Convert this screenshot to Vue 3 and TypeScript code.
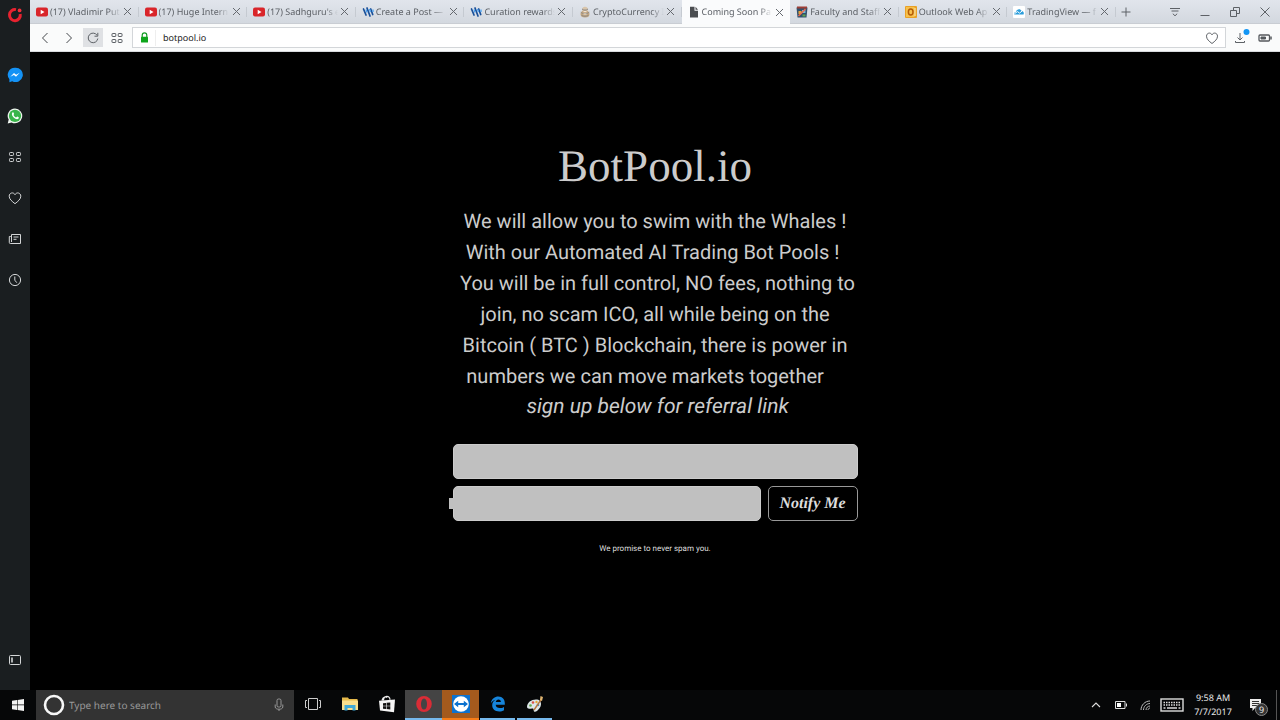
<script setup lang="ts">
import { ref } from 'vue'

type TabIcon = 'youtube' | 'steem' | 'coin' | 'page' | 'school' | 'outlook' | 'cloud'
interface Tab { title: string; icon: TabIcon; active?: boolean }

const tabs: Tab[] = [
  { title: '(17) Vladimir Put', icon: 'youtube' },
  { title: '(17) Huge Intern', icon: 'youtube' },
  { title: "(17) Sadhguru's e", icon: 'youtube' },
  { title: 'Create a Post —', icon: 'steem' },
  { title: 'Curation rewards', icon: 'steem' },
  { title: 'CryptoCurrency I', icon: 'coin' },
  { title: 'Coming Soon Pa', icon: 'page', active: true },
  { title: 'Faculty and Staff', icon: 'school' },
  { title: 'Outlook Web Ap', icon: 'outlook' },
  { title: 'TradingView — f', icon: 'cloud' },
]

const lines = [
  'We will allow you to swim with the Whales !',
  'With our Automated AI Trading Bot Pools !\u00a0',
  '\u00a0You will be in full control, NO fees, nothing to',
  'join, no scam ICO, all while being on the',
  'Bitcoin ( BTC ) Blockchain, there is power in',
  'numbers we can move markets together\u00a0\u00a0\u00a0\u00a0',
]

const address = ref('botpool.io')
const name = ref('')
const email = ref('')
const query = ref('')
</script>

<template>
  <div class="desktop">
    <div class="browser">
      <aside class="sidebar">
        <button class="brand" aria-label="Opera menu">
          <svg width="16" height="16" viewBox="0 0 16 16"><path d="M9 2.600A5.400 5.600 0 1 0 13.200 7" fill="none" stroke="#e8222f" stroke-width="3" /><circle cx="12.600" cy="3.400" r="1.900" fill="#f0303a" /></svg>
        </button>
        <nav class="side-list" aria-label="Sidebar">
          <button aria-label="Messenger">
            <svg width="16" height="16" viewBox="0 0 16 16"><path d="M8 .7a7 7 0 0 0-5.600 11.500v3l2.800-1A7.200 7.200 0 1 0 8 .7z" fill="#1492f5" /><path d="M3.300 9.800 7 5.900l2.100 1.900 3.600-2-3.700 4-2.100-1.900z" fill="#fff" /></svg>
          </button>
          <button aria-label="WhatsApp">
            <svg width="16" height="16" viewBox="0 0 16 16"><path d="M8 .6A7.300 7.300 0 0 0 1.700 11.600L.7 15.400l3.900-1A7.300 7.300 0 1 0 8 .6z" fill="#eef5ee" /><circle cx="8" cy="7.900" r="6.100" fill="#39b54a" /><path d="M5.400 4.500c.7-.6 1.200-.2 1.700 1.300.2.600-.8.800-.5 1.400.5 1 1.200 1.700 2.300 2.200.6.200.9-1 1.400-.8 1.500.7 1.800 1 1.300 1.800-1.800 2.700-8.600-2.600-6.200-5.900z" fill="#fff" /></svg>
          </button>
          <button aria-label="Speed Dial">
            <svg class="line" width="14" height="14" viewBox="0 0 14 14"><rect x="1.500" y="2.500" width="4" height="3" rx=".8" /><rect x="8.500" y="2.500" width="4" height="3" rx=".8" /><rect x="1.500" y="8.500" width="4" height="3" rx=".8" /><rect x="8.500" y="8.500" width="4" height="3" rx=".8" /></svg>
          </button>
          <button aria-label="Bookmarks">
            <svg class="line" width="14" height="14" viewBox="0 0 14 14"><path d="M7 12.700C4 10.300 1.200 8.200 1.200 5.200 1.200 1.700 5.500.7 7 3.700 8.500.7 12.800 1.700 12.800 5.200 12.800 8.200 10 10.300 7 12.700z" /></svg>
          </button>
          <button aria-label="News">
            <svg class="line" width="14" height="14" viewBox="0 0 14 14"><path d="M3.500 2.500h9v9H2.300a1 1 0 0 1-1-1V4.500h1.500M3.500 2.500v7.500M5.500 5h5M5.500 7.300h3" /></svg>
          </button>
          <button aria-label="History">
            <svg class="line" width="14" height="14" viewBox="0 0 14 14"><circle cx="7" cy="7" r="5.600" /><path d="M6.800 3.500v3.700l2 2.500" /></svg>
          </button>
        </nav>
        <button class="side-toggle" aria-label="Toggle sidebar">
          <svg class="line" width="14" height="14" viewBox="0 0 14 14"><rect x="1.500" y="2.500" width="11" height="9" rx="1" /><path d="M4 4.500v5" stroke-width="1.600" /></svg>
        </button>
      </aside>

      <div class="window">
        <header class="tabbar">
          <div class="tabs">
            <div v-for="tab in tabs" :key="tab.title" class="tab" :class="{ active: tab.active }">
              <svg v-if="tab.icon === 'youtube'" class="fav" viewBox="0 0 12 12"><rect y="1.500" width="12" height="9" rx="2" fill="#d9252a" /><path d="M4.700 3.800v4.400L8.500 6z" fill="#fff" /></svg>
              <svg v-else-if="tab.icon === 'steem'" class="fav" viewBox="0 0 12 12"><path d="M1.500 3 4 9M5 2l3 8M8.700 3l2 5.500" fill="none" stroke="#1a5099" stroke-width="1.700" stroke-linecap="round" /><path d="M4 3.500 5 6.500M7.500 3l1 3M11 3.500V6" stroke="#4ba2f2" stroke-width="1.300" /></svg>
              <svg v-else-if="tab.icon === 'coin'" class="fav" viewBox="0 0 12 12"><circle cx="6" cy="3.500" r="2.800" fill="#d9c5aa" /><ellipse cx="6" cy="8" rx="4.500" ry="3.600" fill="#c5a781" /><path d="M1.800 6.200c2 2 6 2 8.400 0M3 3c2 1.500 4 1.500 6 0M2.500 9.300c2 1.300 5 1.300 7 0" fill="none" stroke="#8d8986" /><path d="M4.500 5.600h3M4.500 8h3" stroke="#f3eadc" /></svg>
              <svg v-else-if="tab.icon === 'page'" class="fav" viewBox="0 0 12 12"><path d="M2 .8h4.500v4H10v6.700H2z" fill="#4b4d50" /><path d="M7.500.8 10 3.700H7.500z" fill="#4b4d50" /></svg>
              <svg v-else-if="tab.icon === 'school'" class="fav" viewBox="0 0 12 12"><path d="M.5 1.500h11L10.500 11.500h-9z" fill="#31506d" /><path d="M1 1.500h10" stroke="#9d3d35" stroke-width="2" /><path d="M2.500 5h3v3h-3z" fill="#e3a23c" /><path d="M6 4h3.500v3H6z" fill="#75b9d9" /><path d="m2.500 10 7-7" stroke="#ee6b50" stroke-width="1.500" /><path d="M6.500 8.500h3v2h-3z" fill="#63a44d" /></svg>
              <svg v-else-if="tab.icon === 'outlook'" class="fav" viewBox="0 0 12 12"><rect width="12" height="12" rx="1" fill="#e9a126" /><rect x="1" y="1" width="8.500" height="10" fill="#f7c14c" /><ellipse cx="5.700" cy="6" rx="2.300" ry="3" fill="none" stroke="#b65c08" stroke-width="1.500" /><path d="M10 2v8" stroke="#fff0bd" /></svg>
              <svg v-else class="fav" viewBox="0 0 12 12"><rect width="12" height="12" rx="1" fill="#fff" /><path d="M1.300 8.500c-.7-2 1.300-2.700 1.800-2.800C3.500 2.800 7.500 2.300 8.600 4.900c2 0 2.700 2.200 1.900 3.600z" fill="#2c9edc" /><path d="m1.500 7.600 3-2 2 1.500 2.500-2" fill="none" stroke="#fff" /></svg>
              <span class="tab-title">{{ tab.title }}</span>
              <button class="close" :aria-label="'Close ' + tab.title">
                <svg width="9" height="9" viewBox="0 0 9 9"><path d="m1 1 7 7m0-7-7 7" fill="none" stroke="#65696f" /></svg>
              </button>
            </div>
          </div>
          <div class="window-tools">
            <button aria-label="New tab"><svg class="dark" width="12" height="12" viewBox="0 0 12 12"><path d="M6 1.500v9M1.500 6h9" /></svg></button>
            <span class="grow"></span>
            <button aria-label="Tab menu"><svg class="dark" width="12" height="12" viewBox="0 0 12 12"><path d="M1 2.500h10M2.500 5h7M3.800 7.700 6 9.800l2.200-2.100" /></svg></button>
            <button aria-label="Minimize"><svg class="dark" width="12" height="12" viewBox="0 0 12 12"><path d="M1.500 9.500h9" /></svg></button>
            <button aria-label="Restore"><svg class="dark" width="12" height="12" viewBox="0 0 12 12"><path d="M1.500 4.500h6v6h-6zM4.500 4.500v-3h6v6h-3" /></svg></button>
            <button aria-label="Close window"><svg class="dark" width="12" height="12" viewBox="0 0 12 12"><path d="m1.500 1.500 9 9m0-9-9 9" /></svg></button>
          </div>
        </header>

        <div class="toolbar">
          <button aria-label="Back"><svg class="dark strong" width="12" height="12" viewBox="0 0 12 12"><path d="M8.500 1 3.500 6l5 5" /></svg></button>
          <button aria-label="Forward"><svg class="dark strong" width="12" height="12" viewBox="0 0 12 12"><path d="m3.500 1 5 5-5 5" /></svg></button>
          <button class="reload" aria-label="Reload"><svg class="dark" width="12" height="12" viewBox="0 0 12 12"><path d="M10 3.200A4.800 4.800 0 1 0 10.800 6.500M10.800.8v3.400H7.500" /></svg></button>
          <button aria-label="Speed Dial"><svg class="dark" width="12" height="12" viewBox="0 0 12 12"><rect x="1" y="1.500" width="3.800" height="3" rx=".5" /><rect x="7.200" y="1.500" width="3.800" height="3" rx=".5" /><rect x="1" y="7.500" width="3.800" height="3" rx=".5" /><rect x="7.200" y="7.500" width="3.800" height="3" rx=".5" /></svg></button>
          <div class="address">
            <svg width="9" height="11" viewBox="0 0 9 11"><path d="M2.200 5V3.200a2.300 2.300 0 0 1 4.600 0V5" fill="none" stroke="#159b25" stroke-width="1.200" /><rect x="1" y="4.700" width="7" height="5.800" rx=".5" fill="#0ea51b" /></svg>
            <input v-model="address" aria-label="Address" />
            <button aria-label="Add bookmark"><svg class="dark" width="14" height="14" viewBox="0 0 14 14"><path d="M7 12.500C4 10.200 1.500 8.200 1.500 5.200 1.500 1.900 5.500.9 7 3.800 8.500.9 12.500 1.900 12.500 5.200 12.500 8.200 10 10.200 7 12.500z" /></svg></button>
          </div>
          <button class="download" aria-label="Downloads"><svg class="dark" width="18" height="18" viewBox="0 0 18 18"><path d="M8 4v7M5.500 8.500 8 11l2.500-2.500M3.500 12v1.500h9V12" /><circle cx="14.500" cy="3" r="3" fill="#1296f5" stroke="none" /></svg></button>
          <button aria-label="Battery saver"><svg width="14" height="8" viewBox="0 0 14 8"><rect x="1" y="1" width="10.500" height="6" rx="1" fill="none" stroke="#55585c" stroke-width="1.300" /><path d="M3 3h4.500v2H3z" fill="#55585c" stroke="#55585c" /><path d="M13 2.500v3" stroke="#55585c" stroke-width="1.500" /></svg></button>
        </div>

        <main class="page">
          <div class="card">
            <h1>BotPool.io</h1>
            <p class="pitch">
              <span v-for="line in lines" :key="line">{{ line }}</span>
              <em>&nbsp;sign up below for referral link</em>
            </p>
            <form @submit.prevent>
              <input v-model="name" class="field" aria-label="Name" />
              <div class="row">
                <div class="email"><input v-model="email" class="field" type="email" aria-label="Email" /></div>
                <button class="notify">Notify Me</button>
              </div>
            </form>
            <p class="promise">We promise to never spam you.</p>
          </div>
        </main>
      </div>
    </div>

    <footer class="taskbar">
      <button class="start" aria-label="Start"><svg width="12" height="12" viewBox="0 0 12 12"><path d="M0 1.800 5 1v4.600H0zM5.600.9 12 0v5.600H5.600zM0 6.200h5v4.700L0 10.200zM5.600 6.200H12V12l-6.400-.9z" fill="#f3f3f3" /></svg></button>
      <label class="search">
        <svg width="22" height="22" viewBox="0 0 22 22"><circle cx="11" cy="11" r="9" fill="none" stroke="#f7f7f7" stroke-width="2.600" /></svg>
        <input v-model="query" placeholder="Type here to search" aria-label="Type here to search" />
        <svg width="10" height="14" viewBox="0 0 10 14"><rect x="3" y="1" width="4" height="8" rx="1.500" fill="none" stroke="#999" /><path d="M1.200 6.500V9c0 3 7.600 3 7.600 0V6.500M5 11.500V13" fill="none" stroke="#999" /></svg>
      </label>
      <nav class="apps" aria-label="Taskbar">
        <button aria-label="Task View"><svg width="16" height="14" viewBox="0 0 16 14"><path d="M3.500 1.500h9v11h-9zM2 3.500H.5v7H2M14 3.500h1.500v7H14" fill="none" stroke="#ccc" /></svg></button>
        <button aria-label="File Explorer"><svg width="16" height="14" viewBox="0 0 16 14"><path d="M0 .5h6l1 1.500h8.500v11H0z" fill="#e5b94b" /><path d="M0 3.500h16V13H0z" fill="#fbe08d" /><path d="M2.500 13.500V8h11v5.500h-3V11h-5v2.500z" fill="#41a9d6" /></svg></button>
        <button aria-label="Store"><svg width="18" height="18" viewBox="0 0 18 18"><path d="M5.500 5.500C5.500 0 12 0 12 4.800M4 5.500c1-4 4-4 5-3" fill="none" stroke="#eee" stroke-width="1.200" /><path d="m1 5.800 16-1.300-1 12.700L2 15.500z" fill="#f5f5f5" /><path d="m5 8.200 3-.3v2.800H5zM8.600 7.800l3.700-.4v3.300H8.600zM5 11.200h3V14l-3-.3zM8.600 11.200h3.700v3.300l-3.700-.4z" fill="#111" /></svg></button>
        <button class="current" aria-label="Opera"><svg width="18" height="18" viewBox="0 0 18 18"><path fill-rule="evenodd" d="M9 1a7.800 8 0 1 0 0 16A7.800 8 0 1 0 9 1zM9 3.400c2 0 3 2.500 3 5.600s-1 5.600-3 5.600S6 12.100 6 9s1-5.600 3-5.600z" fill="#d92c36" /></svg></button>
        <button class="alert" aria-label="TeamViewer"><svg width="18" height="18" viewBox="0 0 18 18"><rect width="18" height="18" fill="#0c72cf" /><circle cx="9" cy="9" r="7.800" fill="#fff" /><path d="M2 9 6.200 5.800v2.100h5.600V5.800L16 9l-4.200 3.200v-2.100H6.200v2.100z" fill="#0c72cf" /></svg></button>
        <button class="open" aria-label="Edge"><svg width="16" height="16" viewBox="0 0 16 16"><path d="M.8 7.200C1.700 2.700 4.800.5 8.300.5c4.300 0 6.500 3 6.500 6.600v1.700H5.700c.1 2.100 1.800 3.300 4.100 3.300 1.600 0 3-.4 4.200-1.200v3.400c-1.300.8-3 1.200-4.800 1.200-4.400 0-7-2.600-7-6.200 0-2.400 1.200-4.400 3.300-5.500C3.500 4.300 2 5.500.8 7.200zM5.800 6h5.100c0-1.500-.9-2.400-2.400-2.400S6.100 4.500 5.800 6z" fill="#1685dc" /></svg></button>
        <button class="open" aria-label="Paint"><svg width="18" height="18" viewBox="0 0 18 18"><path d="M1 12c0-5 5-8 10-7.500 4 .5 5 4.500 3 8-2 3-4 4.500-5.500 4.200-1.500-.4 0-2.700-1.700-3.200C5 13 1.500 15 1 12z" fill="#dce6e8" /><circle cx="4.500" cy="10.500" r="1.300" fill="#65a94b" /><circle cx="7" cy="7.500" r="1.300" fill="#d95445" /><circle cx="10.500" cy="7" r="1.200" fill="#e5a937" /><circle cx="12" cy="10" r="1.300" fill="#4e83c5" /><path d="M8 15 15.500 4" stroke="#b5763c" stroke-width="1.400" /><path d="m14 5 .5-4 2.500 1-1 4z" fill="#e0b571" /></svg></button>
      </nav>
      <span class="grow"></span>
      <div class="tray">
        <button aria-label="Hidden icons"><svg width="10" height="6" viewBox="0 0 10 6"><path d="m1 5 4-4 4 4" fill="none" stroke="#ddd" stroke-width="1.100" /></svg></button>
        <button aria-label="Battery"><svg width="12" height="8" viewBox="0 0 12 8"><path d="M.5.5h9.500v7H.5zM11.500 2.500v3" fill="none" stroke="#ddd" /><path d="M2 2h4v4H2z" fill="#fff" /></svg></button>
        <button aria-label="Network"><svg width="11" height="11" viewBox="0 0 11 11"><path d="M1 10C1 5 5 1 10 1M3.500 10C3.500 6.500 6.500 3.500 10 3.500M6 10c0-2.200 1.800-4 4-4M8 10c0-1 1-2 2-2" fill="none" stroke="#bbb" /></svg></button>
        <button class="keys" aria-label="Touch keyboard"><svg width="24" height="14" viewBox="0 0 24 14"><rect x="1" y="1" width="22" height="12" fill="none" stroke="#ddd" stroke-width="1.400" /><path d="M3.500 4.500h17M3.500 7h17" stroke="#ddd" stroke-width="1.500" stroke-dasharray="1.500 1" /><path d="M3.500 10h2M7 10h10M18.500 10h2" stroke="#ddd" stroke-width="1.300" /></svg></button>
        <button class="clock"><span>9:58 AM</span><span>7/7/2017</span></button>
        <button class="notices" aria-label="9 notifications">
          <svg width="14" height="14" viewBox="0 0 14 14"><path d="M1 1h11v9H6l-2.500 3v-3H1z" fill="#eee" /><path d="M3 3.500h7M3 5.500h7M3 7.500h5" stroke="#333" /></svg>
          <span class="count">9</span>
        </button>
        <span class="peek"></span>
      </div>
    </footer>
  </div>
</template>

<style>
body { margin: 0; background: #000; }
</style>

<style scoped>
* { box-sizing: border-box; }
.desktop { min-height: 100vh; display: flex; flex-direction: column; font-family: "Noto Sans", "Open Sans", sans-serif; background: #000; text-rendering: geometricPrecision; }
button { border: 0; padding: 0; background: none; color: inherit; font: inherit; display: flex; align-items: center; justify-content: center; flex: none; text-rendering: inherit; }
input { border: 0; padding: 0; background: none; font: inherit; color: inherit; outline: none; min-width: 0; text-rendering: inherit; }
svg { display: block; flex: none; }
.grow { flex: 1; }
.browser { flex: 1; display: flex; }
.sidebar { width: 30px; flex: none; background: #1a1e20; display: flex; flex-direction: column; align-items: stretch; }
.brand { height: 30px; }
.side-list { flex: 1; padding-top: 24px; }
.side-list button { width: 100%; height: 41px; }
.side-toggle { height: 60px; }
.line { fill: none; stroke: #d4d6d7; stroke-width: 1; }
.dark { fill: none; stroke: #5d6166; stroke-width: 1; }
.dark.strong { stroke: #44474b; }
.window { flex: 1; min-width: 0; display: flex; flex-direction: column; }
.tabbar { height: 24px; display: flex; background: linear-gradient(#e1e5ec, #d3d8df); border-bottom: 1px solid #c9cdd3; font-size: 9px; color: #5c6066; }
.tabs { flex: 1; min-width: 0; display: flex; }
.tab { flex: 1 1 0; min-width: 0; display: flex; align-items: center; padding: 0 6px; gap: 2px; background: linear-gradient(#c5cad1, #c5cad1) right center / 1px 10px no-repeat; }
.tab.active { background: #fafbfc; height: 24px; }
.fav { width: 12px; height: 12px; }
.tab-title { flex: 1; min-width: 0; white-space: nowrap; line-height: 14px; mask-image: linear-gradient(to right, #000 82%, transparent); }
.close { width: 10px; height: 14px; }
.window-tools { width: 164px; display: flex; align-items: center; }
.window-tools button { width: 30px; height: 23px; }
.window-tools button:first-child { width: 20px; }
.toolbar { height: 28px; display: flex; align-items: center; background: #fafbfb; border-bottom: 1px solid #d8dadd; padding: 0 3px; }
.toolbar > button { width: 24px; height: 19px; }
.toolbar > .reload { width: 20px; background: #dfe1e4; margin: 0 2px; }
.address { flex: 1; height: 21px; margin-left: 3px; padding: 0 6px 0 7px; display: flex; align-items: center; border: 1px solid #d3d6d9; background: #fff; font-size: 9px; color: #222; }
.address input { flex: 1; height: 16px; margin-left: 6px; padding-left: 7px; border-left: 1px solid #eee; }
.toolbar > .download { margin-left: 3px; }
.page { flex: 1; background: #000; color: #ccc; display: flex; justify-content: center; padding: 84px 16px 40px; font-family: Roboto, sans-serif; }
.card { width: 405px; text-align: center; }
h1 { margin: 0; font: 45px/60px "Liberation Serif", serif; }
.pitch { margin: 10px 0 0; font-size: 20px; line-height: 31px; }
.pitch span, .pitch em { display: block; white-space: nowrap; }
.pitch em { font-size: 21px; }
form { margin-top: 21px; display: flex; flex-direction: column; gap: 7px; }
.field { width: 100%; height: 35px; border: 1px solid #ccc; border-radius: 5px; background: #c0c0c0; color: #222; padding: 0 12px; display: block; }
.row { display: flex; gap: 7px; }
.email { flex: 1; position: relative; }
.email::before { content: ""; position: absolute; left: -4px; top: 12px; width: 5px; height: 11px; background: #c0c0c0; }
.notify { width: 90px; height: 35px; border: 1px solid #999; border-radius: 5px; font: italic bold 16px "Liberation Serif", cursive; color: #ddd; }
.promise { margin: 20px 0 0; font-size: 8px; line-height: 16px; color: #ddd; }
.taskbar { height: 30px; flex: none; display: flex; background: #060708; color: #e8e8e8; }
.start { width: 36px; }
.search { width: 258px; background: #333; display: flex; align-items: center; padding: 0 10px 0 7px; gap: 4px; font-size: 10px; color: #aaa; }
.search input { flex: 1; height: 20px; }
.search input::placeholder { color: #999; opacity: 1; }
.apps { display: flex; }
.apps button { width: 37px; border-bottom: 2px solid transparent; }
.apps .open { border-image: linear-gradient(to right, transparent 3px, #76b9ed 3px, #76b9ed 34px, transparent 34px) 2; }
.apps .current { background: #444; border-bottom-color: #76b9ed; }
.apps .alert { background: #a45a1d; border-bottom-color: #f67c17; }
.tray { display: flex; }
.tray button { width: 25px; }
.tray .keys { width: 28px; }
.tray .clock { width: 54px; flex-direction: column; font-size: 9px; line-height: 14px; }
.tray .notices { width: 32px; margin-right: 4px; position: relative; }
.count { position: absolute; left: 15px; top: 13px; width: 13px; height: 13px; border: 1px solid #888; border-radius: 50%; background: #333; font-size: 9px; line-height: 11px; text-align: center; }
.peek { width: 4px; border-left: 1px solid #555; }
</style>
